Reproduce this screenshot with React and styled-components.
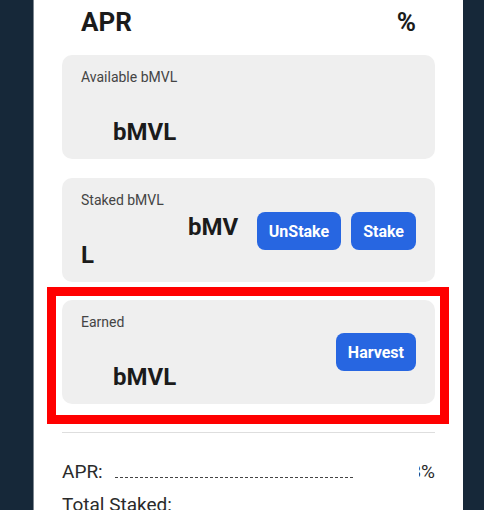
import React from 'react';
import styled, { createGlobalStyle } from 'styled-components';

const GlobalStyle = createGlobalStyle`
  html, body {
    margin: 0;
    padding: 0;
    background: #162839;
    font-family: Roboto, "Liberation Sans", sans-serif;
    overflow: hidden;
  }
`;

const Page = styled.div`
  display: flex;
  padding-left: 33px;
  height: 510px;
  overflow: hidden;
`;

const Card = styled.div`
  width: 430px;
  background: #ffffff;
  border-left: 1px solid #7d8790;
  padding: 0 28px;
  box-sizing: border-box;
`;

const Heading = styled.div`
  display: flex;
  justify-content: space-between;
  align-items: baseline;
  margin: 7px 0 18px;
  padding: 0 19px;
  font-size: 26px;
  line-height: 30px;
  font-weight: 700;
  color: #1b1b1b;
`;

const Box = styled.div`
  background: #efefef;
  border-radius: 10px;
  padding: 15px 19px 13px;
  margin-top: ${(p) => p.$gap || 0}px;
`;

const Label = styled.div`
  font-size: 14px;
  line-height: 15px;
  color: #444;
`;

const Row = styled.div`
  display: flex;
  justify-content: space-between;
  align-items: flex-start;
  margin-top: 3px;
`;

const Value = styled.div`
  margin-top: ${(p) => p.$top}px;
  text-indent: ${(p) => p.$indent}px;
  width: ${(p) => p.$width || 'auto'};
  font-size: 24px;
  line-height: 28px;
  font-weight: 700;
  color: #1b1b1b;
  word-break: break-all;
`;

const Buttons = styled.div`
  display: flex;
  gap: 10px;
  margin-top: ${(p) => p.$top || 0}px;
`;

const Button = styled.button`
  height: 38px;
  padding: 0 12px;
  border: none;
  border-radius: 8px;
  background: #2766e1;
  color: #fff;
  font-family: Roboto, "Liberation Sans", sans-serif;
  font-size: 16px;
  font-weight: 700;
  cursor: pointer;
`;

const Highlight = styled.div`
  margin: 5px -14px 0 -15px;
  border: 9px solid #ff0000;
  padding: 4px 5px 11px 6px;
`;

const Divider = styled.hr`
  margin: 8px 0 0;
  border: none;
  border-top: 1px solid #dedede;
`;

const Stats = styled.div`
  display: flex;
  flex-direction: column;
  gap: 11px;
  margin-top: 28px;
`;

const StatRow = styled.div`
  display: flex;
  align-items: baseline;
  font-size: 19px;
  line-height: 22px;
  color: #2a2a2a;
`;

const Dots = styled.span`
  width: 238px;
  height: 1px;
  margin-left: 12px;
  background: repeating-linear-gradient(to right, #444 0 3px, transparent 3px 5px);
`;

const StatValue = styled.span`
  margin-left: auto;
  width: 16px;
  display: flex;
  justify-content: flex-end;
  overflow: hidden;
  white-space: nowrap;
`;

export default function App() {
  return (
    <>
      <GlobalStyle />
      <Page>
        <Card>
          <Heading>
            <span>APR</span>
            <span>%</span>
          </Heading>

          <Box>
            <Label>Available bMVL</Label>
            <Row>
              <Value $top={30} $indent={32}>bMVL</Value>
            </Row>
          </Box>

          <Box $gap={19}>
            <Label>Staked bMVL</Label>
            <Row>
              <Value $top={2} $indent={107} $width="165px">bMVL</Value>
              <Buttons $top={1}>
                <Button>UnStake</Button>
                <Button>Stake</Button>
              </Buttons>
            </Row>
          </Box>

          <Highlight>
            <Box>
              <Label>Earned</Label>
              <Row>
                <Value $top={30} $indent={32}>bMVL</Value>
                <Buttons>
                  <Button>Harvest</Button>
                </Buttons>
              </Row>
            </Box>
          </Highlight>

          <Divider />

          <Stats>
            <StatRow>
              <span>APR:</span>
              <Dots />
              <StatValue><span>3%</span></StatValue>
            </StatRow>
            <StatRow>
              <span>Total Staked:</span>
            </StatRow>
          </Stats>
        </Card>
      </Page>
    </>
  );
}
